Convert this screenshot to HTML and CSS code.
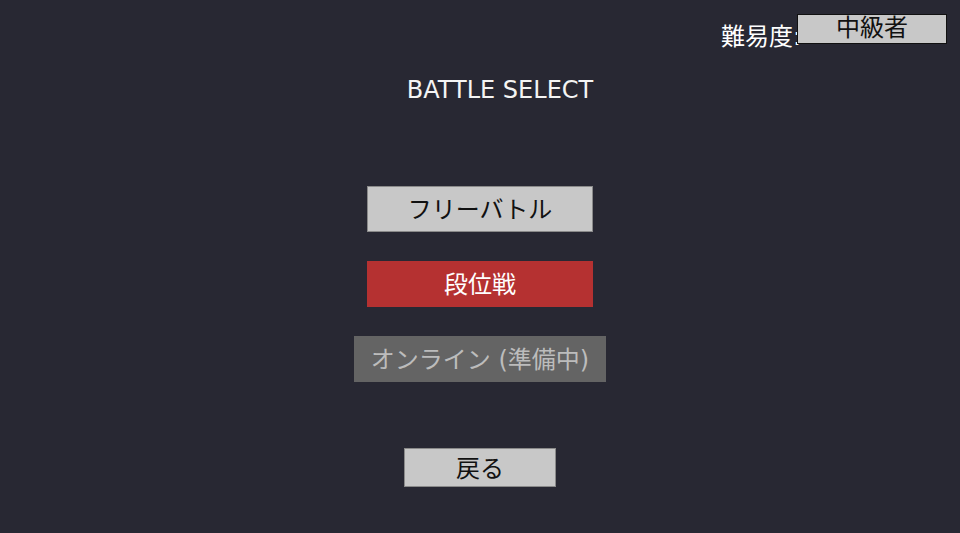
FILE: index.html
```html
<!DOCTYPE html>
<html lang="ja">
<head>
  <meta charset="UTF-8">
  <title>Battle Select</title>
  <link rel="stylesheet" href="styles.css">
</head>
<body>
  <div class="screen">
    <div class="top-bar">
      <span class="difficulty-label">難易度:</span>
      <div class="difficulty-select">中級者</div>
    </div>

    <h1 class="title">BATTLE SELECT</h1>

    <div class="menu">
      <button class="menu-btn">フリーバトル</button>
      <button class="menu-btn ranked">段位戦</button>
      <button class="menu-btn online" disabled>オンライン (準備中)</button>
    </div>

    <button class="menu-btn back">戻る</button>
  </div>
</body>
</html>
```

FILE: styles.css
```css
html, body {
  margin: 0;
  height: 100%;
}

body {
  background: #282833;
  font-family: "DejaVu Sans", "Noto Sans CJK JP", sans-serif;
  color: #ffffff;
  overflow: hidden;
}

.screen {
  display: flex;
  flex-direction: column;
  align-items: center;
  height: 533px;
}

.top-bar {
  align-self: stretch;
  display: flex;
  justify-content: flex-end;
  align-items: flex-start;
  padding: 14px 13px 0 0;
  height: 30px;
}

.difficulty-label {
  font-size: 24px;
  line-height: 30px;
  margin-top: 8px;
  color: #ffffff;
}

.difficulty-select {
  width: 148px;
  height: 28px;
  margin-left: -4px;
  background: #c8c8c8;
  border: 1px solid #111111;
  color: #111111;
  font-size: 24px;
  line-height: 26px;
  text-align: center;
  position: relative;
}

.title {
  margin: 30px 0 0 40px;
  font-size: 24px;
  font-weight: normal;
  line-height: 32px;
  color: #f4f4f4;
}

.menu {
  display: flex;
  flex-direction: column;
  align-items: center;
  gap: 29px;
  margin-top: 80px;
}

.menu-btn {
  font-family: inherit;
  font-size: 24px;
  width: 226px;
  height: 46px;
  padding: 0 0 4px;
  background: #c8c8c8;
  color: #111111;
  border: 1px solid #8a8a8a;
}

.menu-btn.ranked {
  background: #b53131;
  border-color: #b53131;
  color: #ffffff;
}

.menu-btn.online {
  width: 252px;
  background: #646464;
  border-color: #646464;
  color: #bcbcbc;
}

.menu-btn.back {
  width: 152px;
  height: 39px;
  padding-bottom: 2px;
  margin-top: 66px;
}
```
